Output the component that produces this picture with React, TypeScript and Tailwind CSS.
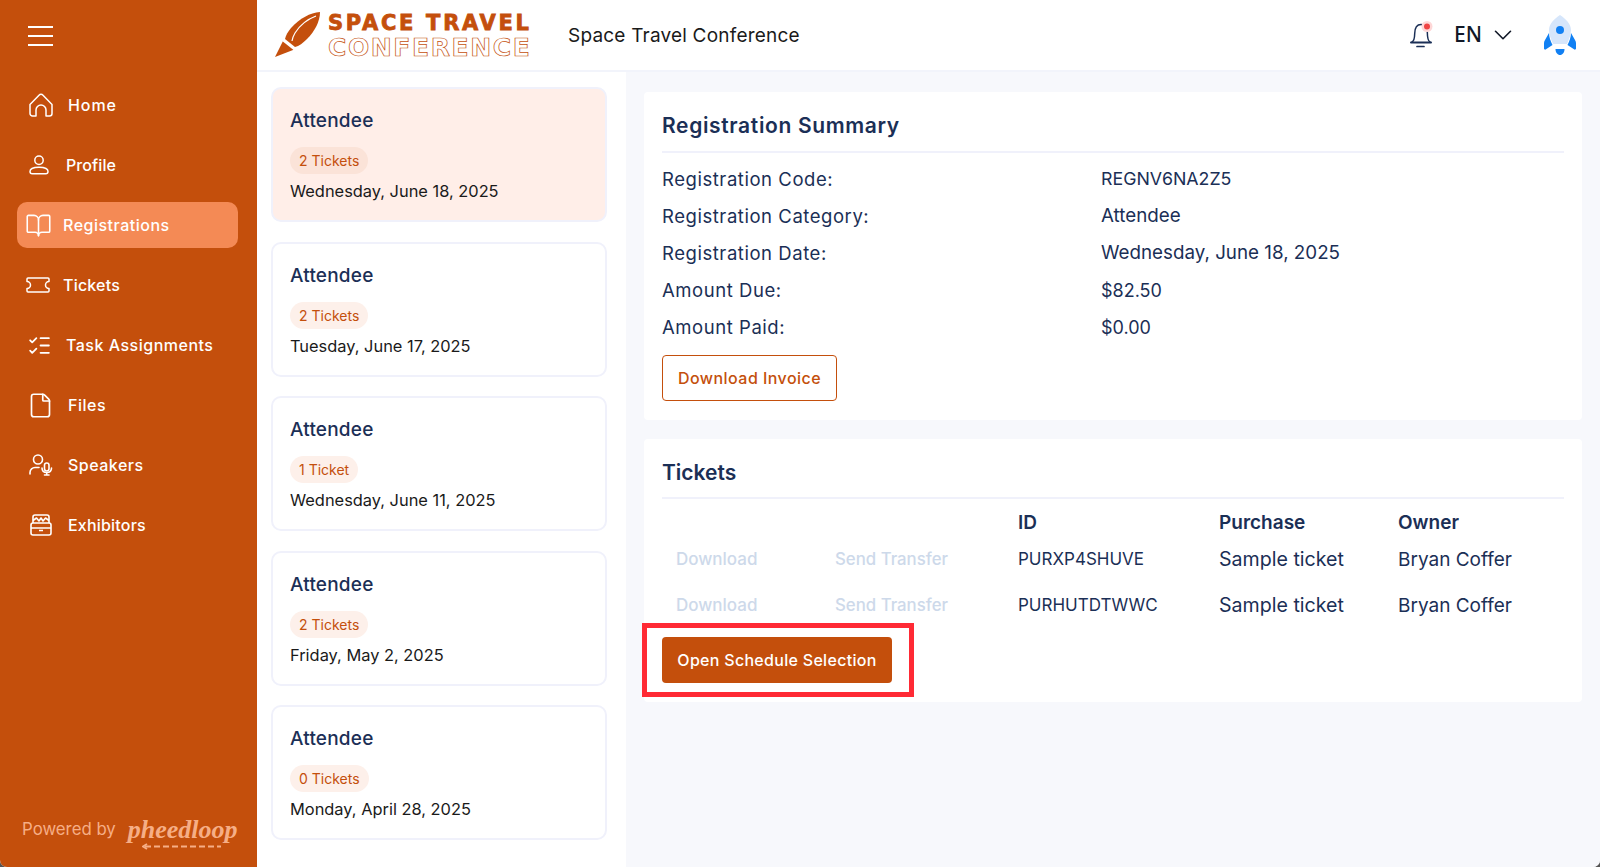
import React from 'react';
import { BookOpen, ChevronDown, File, ListChecks } from 'lucide-react';

const HomeIcon = () => (
  <svg width="24" height="24" viewBox="0 0 24 24" fill="none" stroke="currentColor" strokeWidth="1.5" strokeLinejoin="round">
    <path d="M1 11.500 10 2.200a2.800 2.800 0 0 1 4 0l9 9.300v9a2.500 2.500 0 0 1-2.500 2.500H17v-6a5 5 0 0 0-10 0v6H3.500A2.500 2.500 0 0 1 1 20.500z" />
  </svg>
);

const ProfileIcon = () => (
  <svg width="20" height="20" viewBox="0 0 20 20" fill="none" stroke="currentColor" strokeWidth="1.5">
    <circle cx="10" cy="5.200" r="4.200" />
    <path d="M1 16.500c0-2.500 3.500-4.300 9-4.300s9 1.800 9 4.300c0 1.400-.8 2.300-2.300 2.300H3.300C1.800 18.800 1 17.900 1 16.500z" />
  </svg>
);

const TicketIcon = () => (
  <svg width="24" height="16" viewBox="0 0 24 16" fill="none" stroke="currentColor" strokeWidth="1.5" strokeLinejoin="round">
    <path d="M2 1h20a1 1 0 0 1 1 1v2.500a3.500 3.500 0 0 0 0 7V14a1 1 0 0 1-1 1H2a1 1 0 0 1-1-1v-2.500a3.500 3.500 0 0 0 0-7V2a1 1 0 0 1 1-1z" />
  </svg>
);

const SpeakerIcon = () => (
  <svg width="24" height="22" viewBox="0 0 24 22" fill="none" stroke="currentColor" strokeWidth="1.6" strokeLinecap="round">
    <circle cx="9" cy="5.500" r="4.500" />
    <path d="M1 20v-1.500c0-3 2.500-5 5-5h4" />
    <rect x="15.500" y="9" width="4.500" height="8" rx="2.250" />
    <path d="M13 14c0 3 2 4.500 4.750 4.500S22.500 17 22.500 14M17.750 18.500V21M15.500 21h4.500" />
  </svg>
);

const ExhibitorIcon = () => (
  <svg width="22" height="22" viewBox="0 0 22 22" fill="none" stroke="currentColor" strokeWidth="1.6" strokeLinejoin="round">
    <path d="M3 9V3a2 2 0 0 1 2-2h12a2 2 0 0 1 2 2v6" />
    <path d="M3 6.500 6.500 4l2.500 3 2-3 2 3 2.500-3L19 6.500" />
    <rect x="1" y="9" width="20" height="12" rx="2" />
    <path d="M1 14h20M9 16.500h4" />
  </svg>
);

const BellIcon = () => (
  <svg width="26" height="28" viewBox="0 0 26 28" fill="none">
    <path d="M4 21c2.200-1 2.600-3.500 2.700-8.500C6.800 7 9 3.500 13 3.500c1.200 0 2.200.3 3 .8M19.300 11c.1 6 .5 9 2.700 10" stroke="#1b2f56" strokeWidth="1.500" strokeLinecap="round" />
    <path d="M3 21.500h20" stroke="#1b2f56" strokeWidth="2" strokeLinecap="round" />
    <path d="M9 25.500h7" stroke="#1b2f56" strokeWidth="1.700" strokeLinecap="round" />
    <circle cx="19" cy="5.500" r="5.500" fill="#fed7d7" />
    <circle cx="19" cy="5.500" r="3" fill="#ef4444" />
  </svg>
);

const AvatarRocket = () => (
  <svg width="32" height="42" viewBox="0 0 32 42">
    <path d="M16 1c6 4 11 9 11 15 0 5-2 9-4 14H9c-2-5-4-9-4-14C5 10 10 5 16 1z" fill="#d6e6fb" />
    <circle cx="16" cy="16" r="4" fill="#1180f3" />
    <path d="M5 19 1 26c-.6 1-1 2-1 3v5.500c0 1 1.200 1.500 2 .8L8.500 31C6.500 27 5 23 5 19zM27 19l4 7c.6 1 1 2 1 3v5.500c0 1-1.200 1.500-2 .8L23.500 31C25.500 27 27 23 27 19z" fill="#1180f3" />
    <path d="M11.500 35h9c0 3.500-2 6-4.500 6s-4.500-2.500-4.500-6z" fill="#1180f3" />
  </svg>
);

const LogoRocket = () => (
  <svg width="46" height="46" viewBox="0 0 46 46">
    <path d="M45 0C35 1 25 6 16 16c-3 3.500-5 7-6 11l10 8c4-1 8-4 12-8C40 19 45 9 45 0z" fill="#c44f0c" />
    <path d="M41 4C33 7 25 13 20 21c-1.500 2.500-2.500 5-3 8" stroke="#fff" strokeWidth="1.200" fill="none" />
    <path d="M8 29 0 45l18-7 1-1-10-8z" fill="#c44f0c" />
    <path d="M8 28.500l12 9.500" stroke="#fff" strokeWidth="1.600" />
  </svg>
);

const navItems = [
  { label: 'Home', icon: <HomeIcon />, row: 'pl-[12px] gap-[15px] tracking-[0.9px]' },
  { label: 'Profile', icon: <ProfileIcon />, row: 'pl-[12px] gap-[17px] tracking-[0.1px]' },
  { label: 'Registrations', icon: <BookOpen size={27} strokeWidth={1.4} />, row: 'pl-[8px] gap-[11px] bg-[#f48a55] rounded-[10px] tracking-[0.5px]' },
  { label: 'Tickets', icon: <TicketIcon />, row: 'pl-[9px] gap-[13px] tracking-[0.2px]' },
  { label: 'Task Assignments', icon: <ListChecks size={25} strokeWidth={1.7} />, row: 'pl-[10px] gap-[14px] tracking-[0.5px]' },
  { label: 'Files', icon: <File size={27} strokeWidth={1.5} />, row: 'pl-[10px] gap-[14px] tracking-[0.5px]' },
  { label: 'Speakers', icon: <SpeakerIcon />, row: 'pl-[12px] gap-[15px] tracking-[0.5px]' },
  { label: 'Exhibitors', icon: <ExhibitorIcon />, row: 'pl-[13px] gap-[16px] tracking-[0.2px]' },
];

const registrations = [
  { tickets: '2 Tickets', date: 'Wednesday, June 18, 2025', active: true },
  { tickets: '2 Tickets', date: 'Tuesday, June 17, 2025' },
  { tickets: '1 Ticket', date: 'Wednesday, June 11, 2025' },
  { tickets: '2 Tickets', date: 'Friday, May 2, 2025' },
  { tickets: '0 Tickets', date: 'Monday, April 28, 2025' },
];

const summary = [
  ['Registration Code:', 'REGNV6NA2Z5', 'text-[17.800px]'],
  ['Registration Category:', 'Attendee', 'text-[18.800px]'],
  ['Registration Date:', 'Wednesday, June 18, 2025', 'text-[18.800px]'],
  ['Amount Due:', '$82.50', 'text-[18px]'],
  ['Amount Paid:', '$0.00', 'text-[18px]'],
];

const purchases = [
  ['PURXP4SHUVE', 'Sample ticket', 'Bryan Coffer'],
  ['PURHUTDTWWC', 'Sample ticket', 'Bryan Coffer'],
];

export default function App() {
  return (
    <div className="h-[867px] w-[1600px] bg-[#555]">
      <div className="flex h-full w-full overflow-hidden rounded-b-[7px] bg-white font-['Inter',sans-serif] text-[#1b2f56]">
        {/* Sidebar */}
        <aside className="flex w-[257px] shrink-0 flex-col bg-[#c44f0c] text-white">
          <div className="flex h-[72px] items-center pl-[28px]">
            <div className="flex w-[25px] flex-col gap-[7px]">
              <span className="h-[2px] bg-white" />
              <span className="h-[2px] bg-white" />
              <span className="h-[2px] bg-white" />
            </div>
          </div>
          <nav className="mt-[10px] flex flex-col gap-[14px] px-[17px]">
            {navItems.map((item) => (
              <div key={item.label} className={`flex h-[46px] w-[221px] items-center text-[16px] font-medium ${item.row}`}>
                {item.icon}
                <span>{item.label}</span>
              </div>
            ))}
          </nav>
          <div className="mt-auto flex items-center gap-[12px] pb-[19px] pl-[22px] text-[#f6ae86]">
            <span className="text-[16.800px]">Powered by</span>
            <span className="relative font-['Liberation_Serif',serif] text-[26px] font-bold italic leading-[36px]">
              pheedloop
              <svg className="absolute left-[14px] top-[31px]" width="84" height="7" viewBox="0 0 84 7" fill="none" stroke="#f6ae86" strokeWidth="1.800">
                <path d="M5 1 1 3.500 5 6" />
                <path d="M3 3.500h76" strokeDasharray="6 3" />
              </svg>
            </span>
          </div>
        </aside>

        <div className="flex min-w-0 flex-1 flex-col">
          {/* Header */}
          <header className="flex h-[72px] shrink-0 items-center border-b-2 border-[#f2f4fb] bg-white pl-[18px] pr-[24px]">
            <LogoRocket />
            <div className="ml-[7px] flex w-[206px] flex-col text-[#c44f0c]">
              <span className="whitespace-nowrap font-['DejaVu_Sans',sans-serif] text-[21px] font-bold leading-[24px] tracking-[2.700px] [-webkit-text-stroke:0.8px_#c44f0c]">SPACE TRAVEL</span>
              <span className="whitespace-nowrap font-['DejaVu_Sans',sans-serif] text-[25px] font-bold leading-[25px] tracking-[1.600px] text-white [-webkit-text-stroke:0.7px_#c44f0c]">CONFERENCE</span>
            </div>
            <span className="ml-[34px] pt-[2px] text-[19px] tracking-[0.2px] text-[#1a1a1a]">Space Travel Conference</span>
            <div className="ml-auto flex items-center">
              <BellIcon />
              <span className="ml-[20px] font-['Noto_Sans',sans-serif] text-[21px] font-medium text-[#111827]">EN</span>
              <ChevronDown size={30} strokeWidth={1.300} className="ml-[6px] text-[#111827]" />
              <span className="ml-[26px] flex"><AvatarRocket /></span>
            </div>
          </header>

          <div className="flex min-h-0 flex-1">
            {/* Registration list */}
            <div className="flex w-[369px] shrink-0 flex-col gap-[19.500px] bg-white pl-[14px] pr-[19px] pt-[15px]">
              {registrations.map((reg, i) => (
                <div
                  key={i}
                  className={`h-[135px] rounded-[10px] border-2 border-[#f0f1fb] px-[17px] pt-[18px] ${reg.active ? 'bg-[#ffeee8]' : 'bg-white'}`}
                >
                  <div className="text-[19px] font-medium leading-[28px] tracking-[0.2px]">Attendee</div>
                  <span className={`mt-[12px] flex h-[27px] w-fit items-center rounded-full px-[9px] text-[14px] text-[#c44f0c] ${reg.active ? 'bg-[#fbe3d8]' : 'bg-[#fdf0ea]'}`}>
                    {reg.tickets}
                  </span>
                  <div className="mt-[5px] text-[16.400px] leading-[24px] text-[#1a1a1a]">{reg.date}</div>
                </div>
              ))}
            </div>

            {/* Detail */}
            <main className="flex min-w-0 flex-1 flex-col gap-[19px] bg-[#f7f8fc] px-[18px] pt-[20px]">
              <section className="h-[328px] rounded-[4px] bg-white px-[18px] pt-[18px]">
                <h2 className="border-b-2 border-[#f0f1fb] pb-[9px] text-[21px] font-semibold leading-[32px] tracking-[0.65px]">Registration Summary</h2>
                <div className="mt-[8px] flex flex-col">
                  {summary.map(([label, value, size]) => (
                    <div key={label} className="flex h-[37px] items-center">
                      <span className="w-[439px] text-[18.500px] tracking-[0.55px]">{label}</span>
                      <span className={size}>{value}</span>
                    </div>
                  ))}
                </div>
                <button className="mt-[9px] h-[46px] w-[175px] rounded-[4px] border border-[#c44f0c] bg-white text-[16px] font-medium tracking-[0.45px] text-[#c44f0c]">
                  Download Invoice
                </button>
              </section>

              <section className="relative h-[263px] rounded-[4px] bg-white px-[18px] pt-[18px]">
                <h2 className="border-b-2 border-[#f0f1fb] pb-[8px] text-[21px] font-semibold leading-[32px]">Tickets</h2>
                <div className="mt-[10px] flex h-[28px] items-center text-[19px] font-semibold">
                  <span className="ml-[356px] w-[201px]">ID</span>
                  <span className="w-[179px]">Purchase</span>
                  <span>Owner</span>
                </div>
                {purchases.map(([id, purchase, owner]) => (
                  <div key={id} className="flex h-[46px] items-center">
                    <span className="ml-[14px] w-[159px] text-[17px] font-medium text-[#cdd9ea]">Download</span>
                    <span className="w-[183px] text-[16.800px] font-medium text-[#cdd9ea]">Send Transfer</span>
                    <span className="w-[201px] text-[17px]">{id}</span>
                    <span className="w-[179px] text-[19.600px]">{purchase}</span>
                    <span className="text-[19px]">{owner}</span>
                  </div>
                ))}
                <button className="mt-[8px] h-[46px] w-[230px] rounded-[4px] bg-[#c44f0c] text-[16px] font-medium tracking-[0.3px] text-white">
                  Open Schedule Selection
                </button>
                {/* Red annotation box drawn over the screenshot */}
                <div className="absolute left-[-2px] top-[184px] h-[74px] w-[272px] border-[5px] border-[#ff2a35]" />
              </section>
            </main>
          </div>
        </div>
      </div>
    </div>
  );
}
